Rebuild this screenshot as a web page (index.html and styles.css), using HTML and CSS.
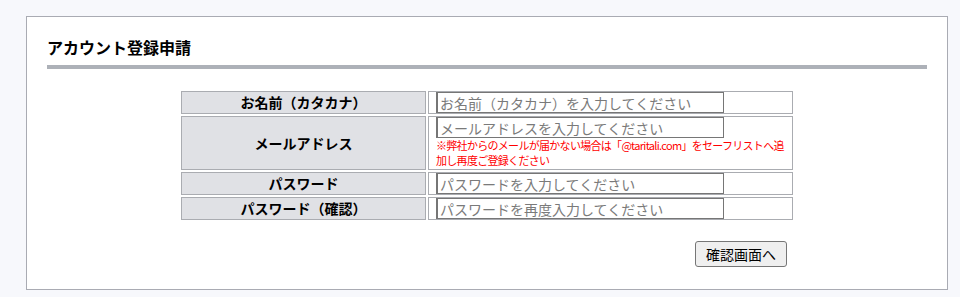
FILE: index.html
```html
<!DOCTYPE html>
<html lang="ja">
<head>
  <meta charset="UTF-8">
  <meta name="viewport" content="width=device-width, initial-scale=1.0">
  <title>アカウント登録申請</title>
  <link rel="stylesheet" href="styles.css">
</head>
<body>
  <div class="panel">
    <h1 class="panel-title">アカウント登録申請</h1>
    <form class="signup-form">
      <table class="form-table">
        <tr>
          <th>お名前（カタカナ）</th>
          <td><input type="text" name="kana" placeholder="お名前（カタカナ）を入力してください"></td>
        </tr>
        <tr>
          <th>メールアドレス</th>
          <td>
            <input type="email" name="mail" placeholder="メールアドレスを入力してください">
            <div class="note">※弊社からのメールが届かない場合は「@taritali.com」をセーフリストへ追加し再度ご登録ください</div>
          </td>
        </tr>
        <tr>
          <th>パスワード</th>
          <td><input type="password" name="password" placeholder="パスワードを入力してください"></td>
        </tr>
        <tr>
          <th>パスワード（確認）</th>
          <td><input type="password" name="password2" placeholder="パスワードを再度入力してください"></td>
        </tr>
      </table>
      <div class="form-actions">
        <button type="submit">確認画面へ</button>
      </div>
    </form>
  </div>
</body>
</html>
```

FILE: styles.css
```css
body {
  margin: 0;
  background: #f7f8fc;
  font-family: "Noto Sans CJK JP", "Noto Sans", sans-serif;
  color: #000;
}

.panel {
  margin: 16px 12px 0 26px;
  padding: 20px 20px 22px;
  background: #fff;
  border: 1px solid #a9abb3;
}

.panel-title {
  margin: 0;
  font-size: 16px;
  line-height: 20px;
  font-weight: bold;
  padding-bottom: 8px;
  border-bottom: 4px solid #adb1b8;
}

.form-table {
  width: 616px;
  margin: 20px auto 0;
  border-collapse: separate;
  border-spacing: 2px;
  font-size: 14px;
  line-height: 21px;
}

.form-table th {
  width: 243px;
  padding: 0;
  background: #e0e1e5;
  border: 1px solid #aaacb1;
  font-weight: bold;
  text-align: center;
}

.form-table td {
  padding: 0 2px 0 7px;
  border: 1px solid #aaacb1;
  vertical-align: top;
}

.form-table input {
  display: block;
  box-sizing: border-box;
  width: 288px;
  height: 21px;
  margin: 0;
  padding: 0 2px;
  border: 1px solid #767676;
  border-left-width: 2px;
  font-family: inherit;
  font-size: 14px;
  color: #000;
}

.form-table input::placeholder {
  color: #7a7a7a;
}

.note {
  font-size: 11px;
  line-height: 15px;
  letter-spacing: -0.7px;
  padding-bottom: 1px;
  color: #ff0000;
}

.form-actions {
  width: 612px;
  margin: 19px auto 0;
  text-align: right;
}

.form-actions button {
  box-sizing: border-box;
  width: 92px;
  height: 26px;
  margin-right: 6px;
  padding: 0;
  font-family: inherit;
  font-size: 14px;
  line-height: 18px;
  background: #efefef;
  border: 1px solid #767676;
  border-radius: 3px;
  color: #000;
  vertical-align: top;
}
```
